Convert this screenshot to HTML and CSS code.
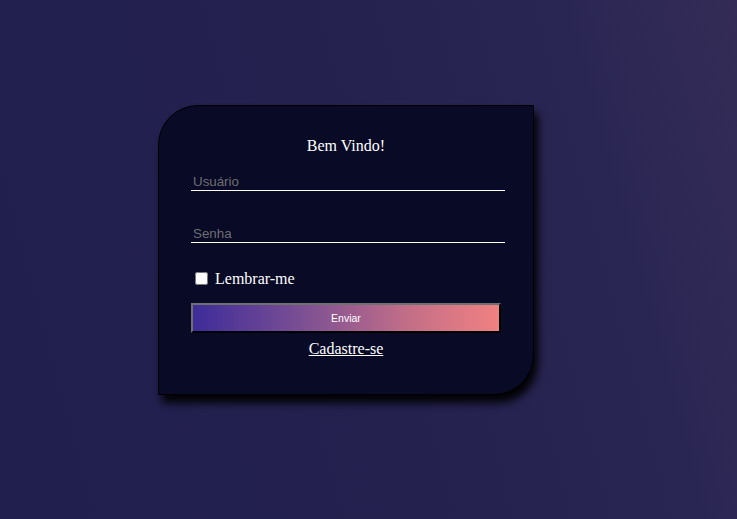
FILE: index.html
```html
<!DOCTYPE html>
<html lang="pt-BR">
<head>
<meta charset="utf-8">
<title>Login</title>
<link rel="stylesheet" href="styles.css">
</head>
<body>
<div class="page">
  <form class="card">
    <h1 class="title">Bem Vindo!</h1>
    <input class="field" type="text" placeholder="Usuário">
    <input class="field field-pass" type="password" placeholder="Senha">
    <div class="remember"><input class="check" type="checkbox" id="lembrar"> <label for="lembrar">Lembrar-me</label></div>
    <button class="send" type="button">Enviar</button>
    <div class="signup"><a href="#" class="signup-link">Cadastre-se</a></div>
  </form>
</div>
</body>
</html>
```
FILE: styles.css
```css
html, body {
  margin: 0;
  height: 100%;
}
body {
  background: linear-gradient(75deg, #211f4e 0%, #24214f 50%, #2a2653 80%, #342c57 100%);
  font-family: "Liberation Serif", "Times New Roman", serif;
  color: #ffffff;
}
.page {
  padding: 105px 0 0 158px;
}
.card {
  box-sizing: border-box;
  width: 376px;
  background: #080a26;
  border: 1px solid #000000;
  border-radius: 40px 0 40px 0;
  box-shadow: 4px 8px 9px rgba(0, 0, 0, 0.95);
  padding: 31px 28px 36px 32px;
  display: flex;
  flex-direction: column;
  align-items: flex-start;
}
.title {
  font-size: 16px;
  font-weight: normal;
  margin: 0 -28px 18px -32px;
  align-self: stretch;
  text-align: center;
  line-height: 18px;
}
.field {
  box-sizing: border-box;
  width: 314px;
  height: 18px;
  font-family: "Liberation Sans", Arial, sans-serif;
  font-size: 13.33px;
  padding: 1px 2px;
  border: none;
  border-bottom: 1px solid #ffffff;
  background: transparent;
  color: #ffffff;
  outline: none;
  margin: 0;
}
.field::placeholder {
  color: #6e6e72;
}
.field-pass {
  margin-top: 34px;
}
.remember {
  margin-top: 26px;
  font-size: 16px;
  line-height: 18px;
}
.check {
  width: 13px;
  height: 13px;
  margin: 3px 3px 3px 4px;
  vertical-align: -1px;
}
.send {
  margin-top: 15px;
  width: 310px;
  height: 30px;
  border: 2px outset #767676;
  border-color: #707070 #3a3a3a #3a3a3a #707070;
  background: linear-gradient(90deg, #3d2c99 0%, #7a4f93 35%, #c26e88 70%, #f18181 100%);
  color: #ffffff;
  font-family: "Liberation Sans", Arial, sans-serif;
  font-size: 10.5px;
  padding: 0;
}
.signup {
  align-self: stretch;
  margin: 7px -28px 0 -32px;
  text-align: center;
  line-height: 18px;
  font-size: 16px;
}
.signup-link {
  color: #ffffff;
}
```
